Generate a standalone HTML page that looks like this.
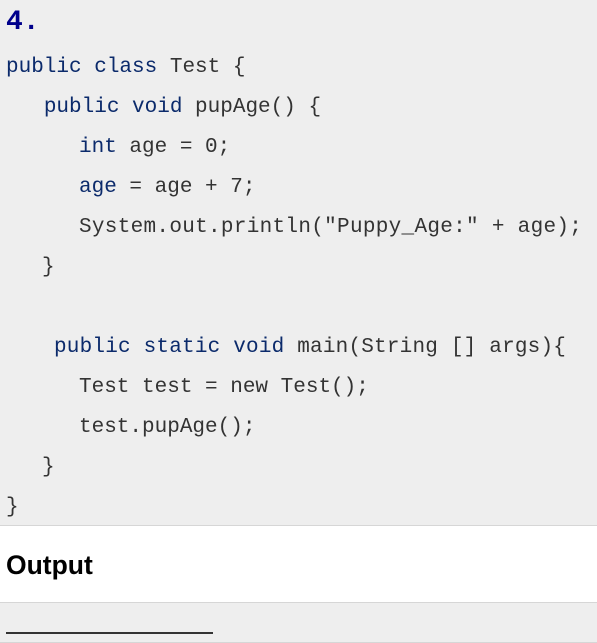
<!DOCTYPE html>
<html><head><meta charset="utf-8"><style>
html,body{margin:0;padding:0}
body{width:597px;height:643px;position:relative;background:#eee;overflow:hidden}
.code{position:absolute;left:0;top:0;width:597px;height:525px;background:#eee;border-bottom:1px solid #d6d6d6}
.l{position:absolute;left:6px;font:21px/40px "Liberation Mono",monospace;color:#333;white-space:pre}
.k{color:#0b2a6b}
.t{position:absolute;left:6px;top:5px;font:bold 28px/36px "Liberation Mono",monospace;color:#00008b}
.out{position:absolute;left:0;top:526px;width:597px;height:76px;background:#fff;border-bottom:1px solid #d6d6d6}
.out span{position:absolute;left:6px;top:21px;font:bold 26.5px/36px "Liberation Sans",sans-serif;color:#000}
.u{position:absolute;left:6px;top:632px;width:207px;height:2px;background:#333}
.b{position:absolute;left:0;top:642px;width:597px;height:1px;background:#d6d6d6}
</style></head><body>
<div class="code">
<div class="t">4.</div>
<div class="l" style="top:48px"><span class="k">public class</span> Test {</div>
<div class="l" style="top:88px">   <span class="k">public void</span> pupAge() {</div>
<div class="l" style="top:128px;left:79px"><span class="k">int</span> age = 0;</div>
<div class="l" style="top:168px;left:79px"><span class="k">age</span> = age + 7;</div>
<div class="l" style="top:208px;left:79px;letter-spacing:0.3px">System.out.println("Puppy_Age:" + age);</div>
<div class="l" style="top:248px;left:42px">}</div>
<div class="l" style="top:328px;left:54px;letter-spacing:0.2px"><span class="k">public static void</span> main(String [] args){</div>
<div class="l" style="top:368px;left:79px">Test test = new Test();</div>
<div class="l" style="top:408px;left:79px">test.pupAge();</div>
<div class="l" style="top:448px;left:42px">}</div>
<div class="l" style="top:488px">}</div>
</div>
<div class="out"><span>Output</span></div>
<div class="u"></div>
<div class="b"></div>
</body></html>
